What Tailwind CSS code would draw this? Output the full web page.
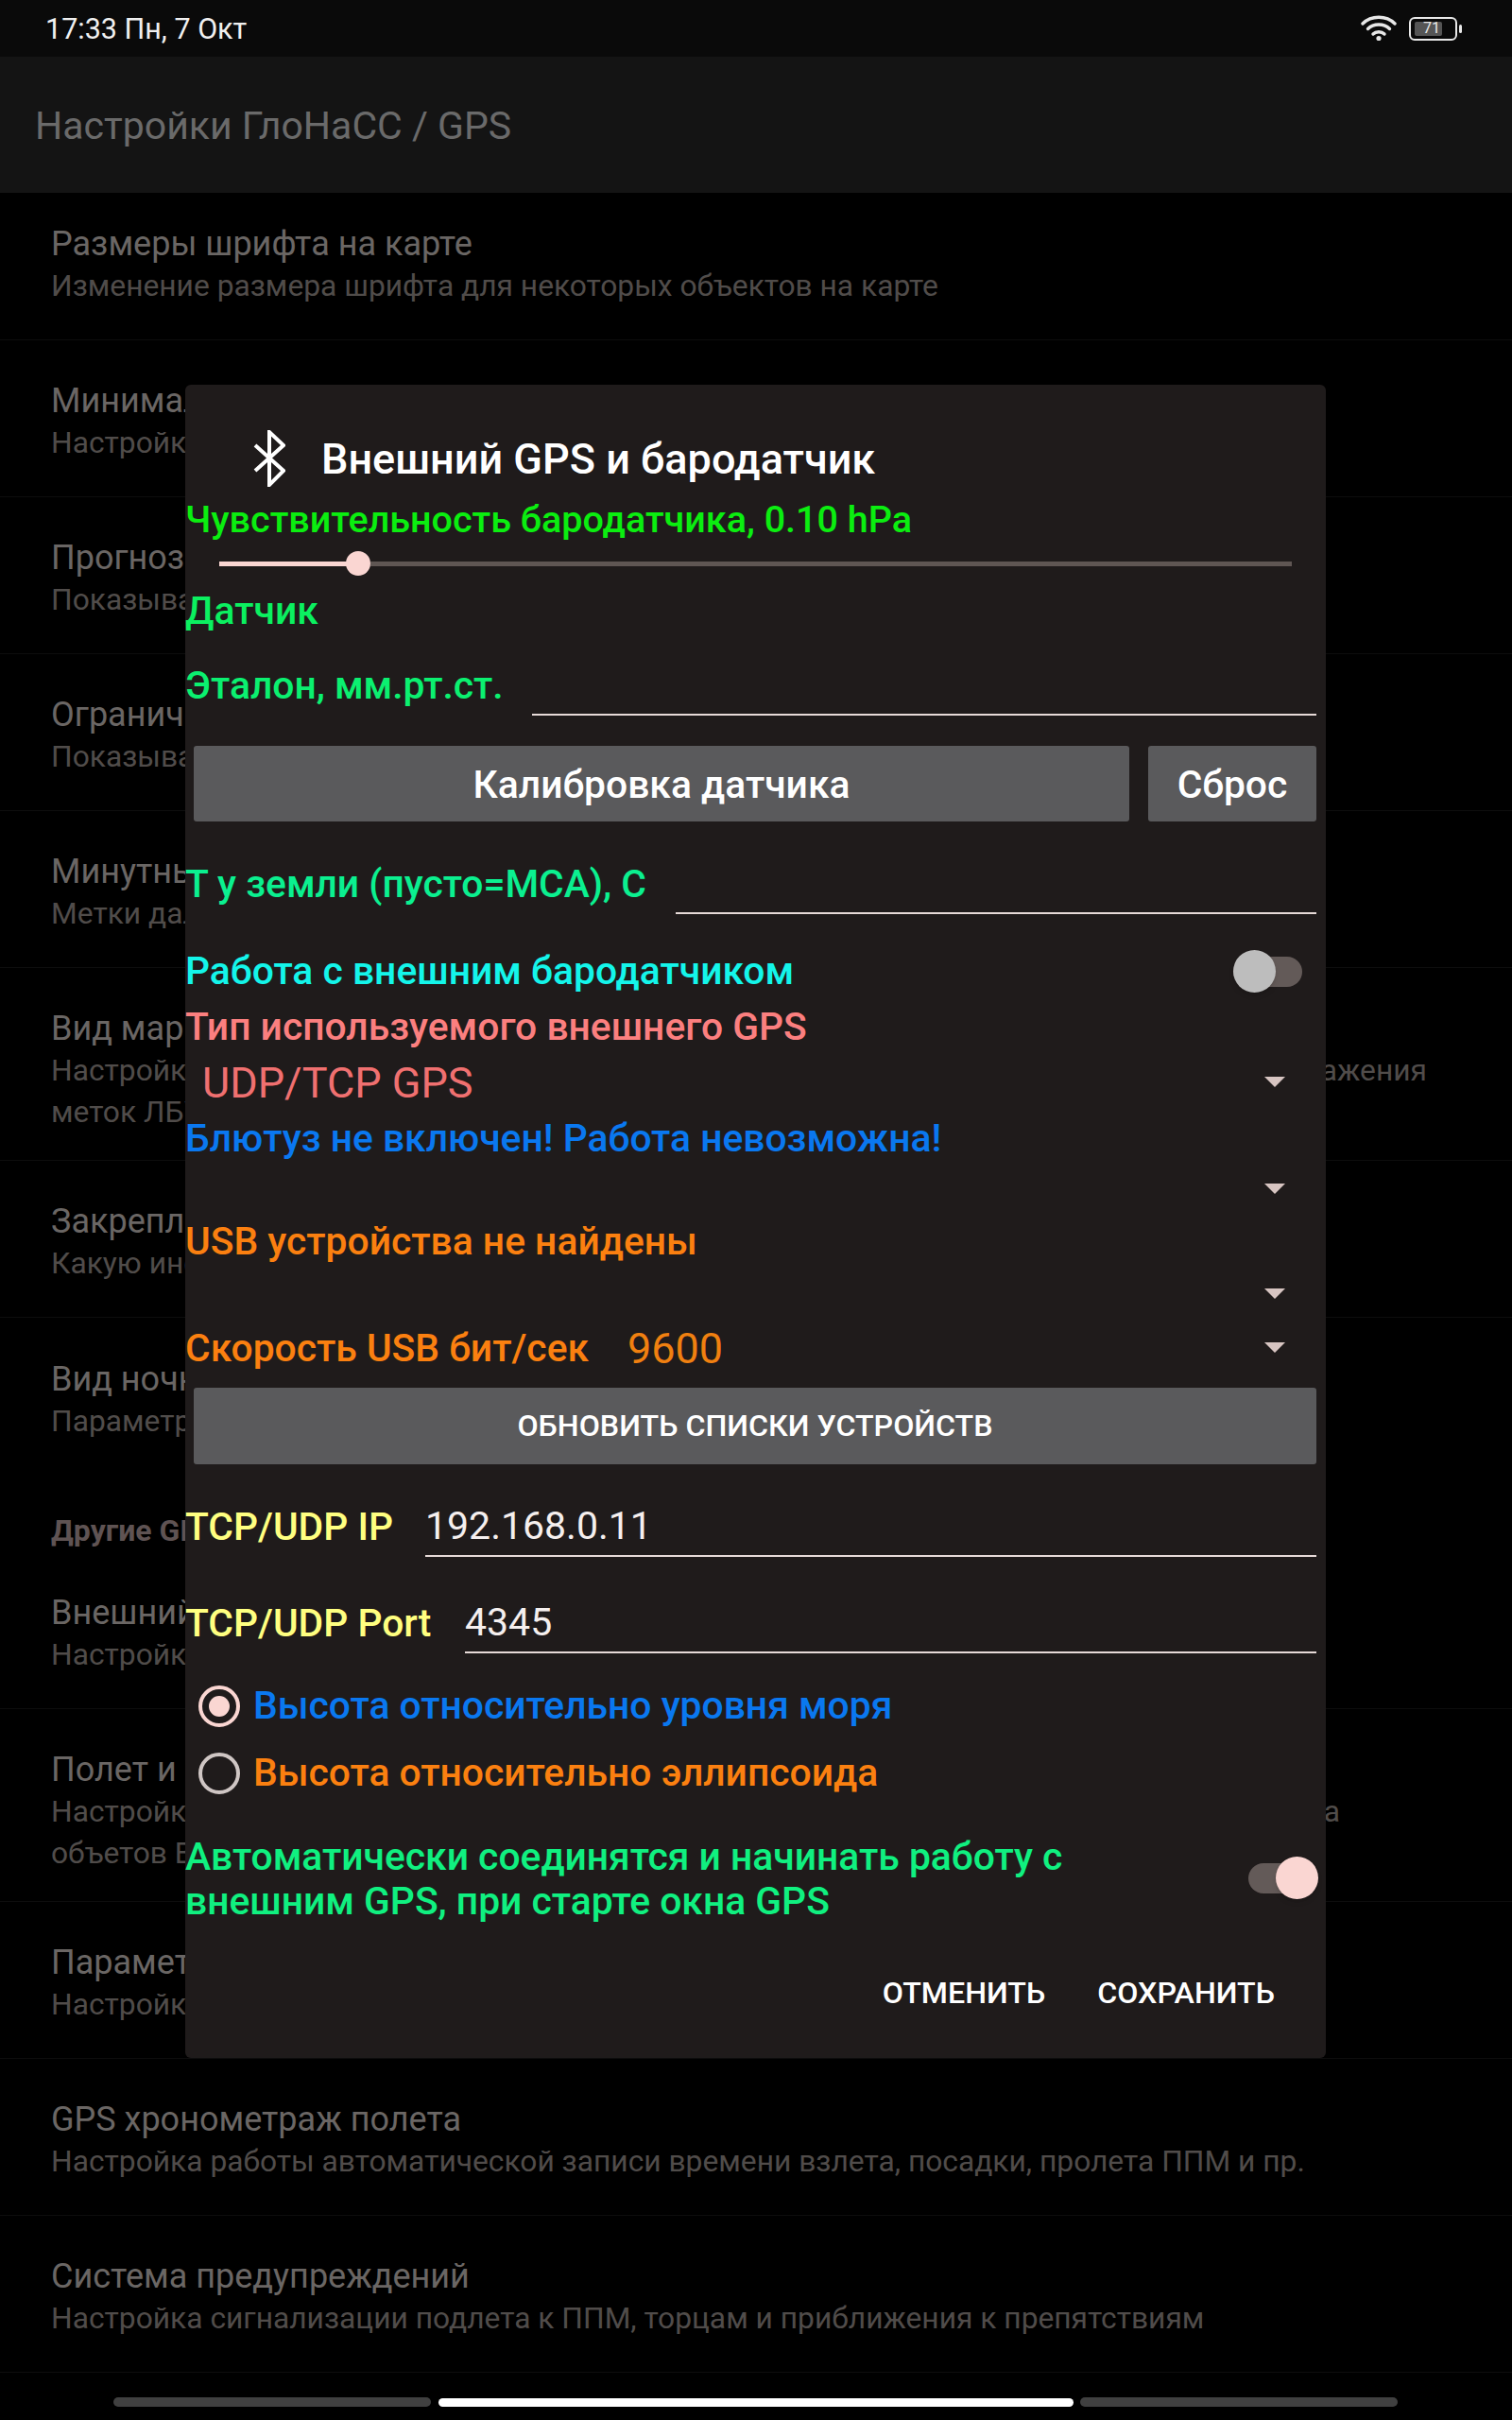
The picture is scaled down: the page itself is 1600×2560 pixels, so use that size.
<!DOCTYPE html>
<html lang="ru">
  <head>
    <meta charset="UTF-8" />
    <script src="https://cdn.jsdelivr.net/npm/@tailwindcss/browser@4"></script>
    <title>Настройки ГлоНаСС / GPS</title>
  </head>
  <body class="bg-black font-[Roboto,sans-serif]">
    <div class="relative w-[1600px] h-[2560px] overflow-hidden bg-black">
      <!-- status bar -->
      <div class="h-[60px] bg-[#0a0a0a] flex items-center justify-between pl-[48px] pr-[53px]">
        <span class="pt-[2px] text-[30.500px] text-[#f0f0f0]">17:33 Пн, 7 Окт</span>
        <div class="flex items-center gap-[13px]">
          <svg width="38" height="28" viewBox="0 0 38 28" fill="none" stroke="#e8e8e8" stroke-width="3.4" stroke-linecap="round">
            <path d="M2 9C11 0 27 0 36 9" />
            <path d="M7.5 14.5C13.5 8.5 24.500 8.500 30.500 14.500" />
            <path d="M13 20C16 17 22 17 25 20" />
            <circle cx="19" cy="24.500" r="2.600" fill="#e8e8e8" stroke="none" />
          </svg>
          <div class="flex items-center gap-[2px]">
            <div class="relative w-[51px] h-[25px] rounded-[6px] border-2 border-[#e8e8e8]">
              <div class="absolute left-[4px] top-[3px] w-[29px] h-[15px] bg-[#555555] rounded-[2px]"></div>
              <span class="absolute inset-0 flex items-center justify-center pr-[3px] text-[16px] leading-none text-[#e8e8e8]">71</span>
            </div>
            <div class="w-[3px] h-[9px] rounded-full bg-[#e8e8e8]"></div>
          </div>
        </div>
      </div>

      <!-- app bar -->
      <div class="h-[144px] bg-[#141414] flex items-center pl-[37px] pt-[4px]">
        <span class="text-[41px] text-[#6a6a6a]">Настройки ГлоНаСС / GPS</span>
      </div>

      <!-- settings list, scrolled by 10px -->
      <div class="-mt-[10px] flex flex-col">
        <div class="h-[166px] border-b border-[#0d0d0d] px-[54px] pt-[7px] flex flex-col justify-center">
          <div class="text-[36px] leading-[46px] text-[#6a6664]">Размеры шрифта на карте</div>
          <div class="text-[31.750px] leading-[44px] text-[#504c4a]">Изменение размера шрифта для некоторых объектов на карте</div>
        </div>
        <div class="h-[166px] border-b border-[#0d0d0d] px-[54px] pt-[7px] flex flex-col justify-center">
          <div class="text-[36px] leading-[46px] text-[#6a6664]">Минимальная</div>
          <div class="text-[31.750px] leading-[44px] text-[#504c4a]">Настройка</div>
        </div>
        <div class="h-[166px] border-b border-[#0d0d0d] px-[54px] pt-[7px] flex flex-col justify-center">
          <div class="text-[36px] leading-[46px] text-[#6a6664]">Прогноз</div>
          <div class="text-[31.750px] leading-[44px] text-[#504c4a]">Показывать</div>
        </div>
        <div class="h-[166px] border-b border-[#0d0d0d] px-[54px] pt-[7px] flex flex-col justify-center">
          <div class="text-[36px] leading-[46px] text-[#6a6664]">Ограничения</div>
          <div class="text-[31.750px] leading-[44px] text-[#504c4a]">Показывать</div>
        </div>
        <div class="h-[166px] border-b border-[#0d0d0d] px-[54px] pt-[7px] flex flex-col justify-center">
          <div class="text-[36px] leading-[46px] text-[#6a6664]">Минутные</div>
          <div class="text-[31.750px] leading-[44px] text-[#504c4a]">Метки дальности</div>
        </div>
        <div class="h-[204px] border-b border-[#0d0d0d] px-[54px] pt-[13px] flex flex-col justify-center">
          <div class="text-[36px] leading-[46px] text-[#6a6664]">Вид маршрута</div>
          <div class="flex justify-between pr-[36px] text-[31.750px] leading-[44px] text-[#504c4a]"><span>Настройка</span><span>ажения</span></div>
          <div class="text-[31.750px] leading-[44px] text-[#504c4a]">меток ЛБУ</div>
        </div>
        <div class="h-[166px] border-b border-[#0d0d0d] px-[54px] pt-[7px] flex flex-col justify-center">
          <div class="text-[36px] leading-[46px] text-[#6a6664]">Закрепленные</div>
          <div class="text-[31.750px] leading-[44px] text-[#504c4a]">Какую информацию</div>
        </div>
        <div class="h-[166px] px-[54px] pt-[7px] flex flex-col justify-center">
          <div class="text-[36px] leading-[46px] text-[#6a6664]">Вид ночной</div>
          <div class="text-[31.750px] leading-[44px] text-[#504c4a]">Параметры</div>
        </div>
        <div class="h-[82px] px-[54px] flex items-end pb-[1px] border-b border-transparent">
          <span class="text-[32px] leading-[42px] font-bold text-[#5f5353]">Другие GPS</span>
        </div>
        <div class="h-[166px] border-b border-[#0d0d0d] px-[54px] pt-[7px] flex flex-col justify-center">
          <div class="text-[36px] leading-[46px] text-[#6a6664]">Внешний GPS</div>
          <div class="text-[31.750px] leading-[44px] text-[#504c4a]">Настройка</div>
        </div>
        <div class="h-[204px] border-b border-[#0d0d0d] px-[54px] pt-[13px] flex flex-col justify-center">
          <div class="text-[36px] leading-[46px] text-[#6a6664]">Полет и</div>
          <div class="flex justify-between pr-[128px] text-[31.750px] leading-[44px] text-[#504c4a]"><span>Настройка</span><span>а</span></div>
          <div class="text-[31.750px] leading-[44px] text-[#504c4a]">объетов ВП</div>
        </div>
        <div class="h-[166px] border-b border-[#0d0d0d] px-[54px] pt-[7px] flex flex-col justify-center">
          <div class="text-[36px] leading-[46px] text-[#6a6664]">Параметры</div>
          <div class="text-[31.750px] leading-[44px] text-[#504c4a]">Настройка</div>
        </div>
        <div class="h-[166px] border-b border-[#0d0d0d] px-[54px] pt-[7px] flex flex-col justify-center">
          <div class="text-[36px] leading-[46px] text-[#6a6664]">GPS хронометраж полета</div>
          <div class="text-[31.750px] leading-[44px] text-[#504c4a]">Настройка работы автоматической записи времени взлета, посадки, пролета ППМ и пр.</div>
        </div>
        <div class="h-[166px] border-b border-[#0d0d0d] px-[54px] pt-[7px] flex flex-col justify-center">
          <div class="text-[36px] leading-[46px] text-[#6a6664]">Система предупреждений</div>
          <div class="text-[31.750px] leading-[44px] text-[#504c4a]">Настройка сигнализации подлета к ППМ, торцам и приближения к препятствиям</div>
        </div>
      </div>

      <!-- navigation handle -->
      <div class="absolute left-[120px] top-[2536px] flex items-center gap-[8px]">
        <div class="w-[336px] h-[10px] rounded-full bg-[#404040]"></div>
        <div class="w-[672px] h-[9px] rounded-full bg-white"></div>
        <div class="w-[336px] h-[10px] rounded-full bg-[#404040] -ml-[1px]"></div>
      </div>

      <!-- dialog -->
      <div class="absolute left-[196px] top-[407px] w-[1207px] h-[1770px] rounded-[6px] bg-[#1f1b1b] pt-[38px] flex flex-col">
        <div class="h-[80px] flex items-center pl-[72px] gap-[38px]">
          <svg width="34" height="60" viewBox="0 0 34 60" fill="none" stroke="white" stroke-width="4">
            <path d="M2 16L32 43L17 58V2L32 16L2 43" />
          </svg>
          <span class="pt-[2px] text-[45px] font-medium text-white">Внешний GPS и бародатчик</span>
        </div>
        <div class="h-[50px] flex items-center text-[39.500px] font-medium text-[#0bee10]">Чувствительность бародатчика, 0.10 hPa</div>
        <!-- slider -->
        <div class="h-[42px] flex items-center pl-[36px]">
          <div class="w-[147px] h-[5px] bg-[#fad6d2]"></div>
          <div class="w-[26px] h-[26px] rounded-full bg-[#fad6d2] -ml-[13px] shrink-0"></div>
          <div class="w-[975px] h-[5px] bg-[#5f5653] -mr-[13px] shrink-0"></div>
        </div>
        <div class="h-[60px] mb-[17px] flex items-center text-[40.800px] font-medium text-[#0bf060]">Датчик</div>

        <div class="h-[63px] flex items-center pr-[10px]">
          <span class="text-[40.800px] font-medium text-[#0bf070]">Эталон, мм.рт.ст.</span>
          <div class="ml-auto w-[830px] h-full border-b-2 border-[#e6dad8]"></div>
        </div>
        <div class="mt-[32px] flex gap-[20px] pl-[9px] pr-[10px]">
          <div class="w-[990px] h-[80px] pt-[4px] rounded-[3px] bg-[#5a5a5c] flex items-center justify-center text-[40.800px] font-medium text-white">Калибровка датчика</div>
          <div class="w-[178px] h-[80px] pt-[4px] rounded-[3px] bg-[#5a5a5c] flex items-center justify-center text-[40.800px] font-medium text-white">Сброс</div>
        </div>
        <div class="mt-[35px] h-[63px] flex items-center pr-[10px]">
          <span class="text-[40.800px] font-medium text-[#0bf090]">Т у земли (пусто=МСА), С</span>
          <div class="ml-auto w-[678px] h-full border-b-2 border-[#e6dad8]"></div>
        </div>
        <div class="mt-[31px] h-[60px] flex items-center justify-between pr-[25px]">
          <span class="text-[40.800px] font-medium text-[#14f5ea]">Работа с внешним бародатчиком</span>
          <div class="relative w-[73px] h-[32px] rounded-full bg-[#635a58]">
            <div class="absolute left-0 -top-[7px] w-[45px] h-[45px] rounded-full bg-[#bdbdbd] shadow-md"></div>
          </div>
        </div>
        <div class="h-[58px] flex items-center text-[40.800px] font-medium text-[#fb7f7f]">Тип используемого внешнего GPS</div>
        <div class="h-[60px] flex items-center justify-between pl-[18px] pr-[43px]">
          <span class="text-[45px] text-[#f07070]">UDP/TCP GPS</span>
          <div class="w-0 h-0 -mt-[4px] border-x-[11px] border-x-transparent border-t-[11px] border-t-[#d7c5c2]"></div>
        </div>
        <div class="h-[58px] flex items-center text-[40.800px] font-medium text-[#0a78f0]">Блютуз не включен! Работа невозможна!</div>
        <div class="h-[46px] flex items-center justify-end pr-[43px]">
          <div class="w-0 h-0 border-x-[11px] border-x-transparent border-t-[11px] border-t-[#d7c5c2]"></div>
        </div>
        <div class="h-[68px] flex items-center text-[40.800px] font-medium text-[#fb8010]">USB устройства не найдены</div>
        <div class="h-[40px] flex items-center justify-end pr-[43px]">
          <div class="w-0 h-0 border-x-[11px] border-x-transparent border-t-[11px] border-t-[#d7c5c2]"></div>
        </div>
        <div class="h-[78px] flex items-center pr-[43px]">
          <span class="w-[468px] text-[40.800px] font-medium text-[#fb8010]">Скорость USB бит/сек</span>
          <span class="text-[45px] text-[#f08010]">9600</span>
          <div class="ml-auto -mt-[4px] w-0 h-0 border-x-[11px] border-x-transparent border-t-[11px] border-t-[#d7c5c2]"></div>
        </div>
        <div class="mt-[2px] ml-[9px] mr-[10px] h-[81px] rounded-[3px] bg-[#5a5a5c] flex items-center justify-center text-[32.200px] font-medium text-white">ОБНОВИТЬ СПИСКИ УСТРОЙСТВ</div>

        <div class="mt-[35px] h-[63px] flex items-center pr-[10px]">
          <span class="text-[40.800px] font-medium text-[#ffff80]">TCP/UDP IP</span>
          <div class="ml-auto w-[943px] h-full border-b-2 border-[#e6dad8] flex items-center text-[41px] text-[#f5efee]">192.168.0.11</div>
        </div>
        <div class="mt-[39px] h-[63px] flex items-center pr-[10px]">
          <span class="text-[40.800px] font-medium text-[#ffff80]">TCP/UDP Port</span>
          <div class="ml-auto w-[901px] h-full border-b-2 border-[#e6dad8] flex items-center text-[41px] text-[#f5efee]">4345</div>
        </div>
        <div class="mt-[21px] h-[70px] flex items-center pl-[14px] gap-[14px]">
          <div class="w-[44px] h-[44px] rounded-full border-4 border-[#fad6d2] flex items-center justify-center">
            <div class="w-[22px] h-[22px] rounded-full bg-[#fad6d2]"></div>
          </div>
          <span class="text-[40.800px] font-medium text-[#0a78f0]">Высота относительно уровня моря</span>
        </div>
        <div class="h-[72px] flex items-center pl-[14px] gap-[14px]">
          <div class="w-[44px] h-[44px] rounded-full border-4 border-[#cfc6c4]"></div>
          <span class="text-[40.800px] font-medium text-[#fb8010]">Высота относительно эллипсоида</span>
        </div>
        <div class="mt-[28px] h-[95px] flex items-center justify-between pr-[8px]">
          <div class="w-[1000px] text-[40.800px] leading-[47px] font-medium text-[#10f080]">Автоматически соединятся и начинать работу с внешним GPS, при старте окна GPS</div>
          <div class="relative w-[66px] h-[32px] rounded-full bg-[#635a58] mr-[8px] -mt-[2px]">
            <div class="absolute -right-[8px] -top-[7px] w-[45px] h-[45px] rounded-full bg-[#fad6d2] shadow-md"></div>
          </div>
        </div>
        <div class="mt-[43px] h-[60px] flex items-center justify-end gap-[55px] pr-[54px] text-[32.200px] font-medium text-white">
          <span>ОТМЕНИТЬ</span>
          <span>СОХРАНИТЬ</span>
        </div>
      </div>
    </div>
  </body>
</html>
